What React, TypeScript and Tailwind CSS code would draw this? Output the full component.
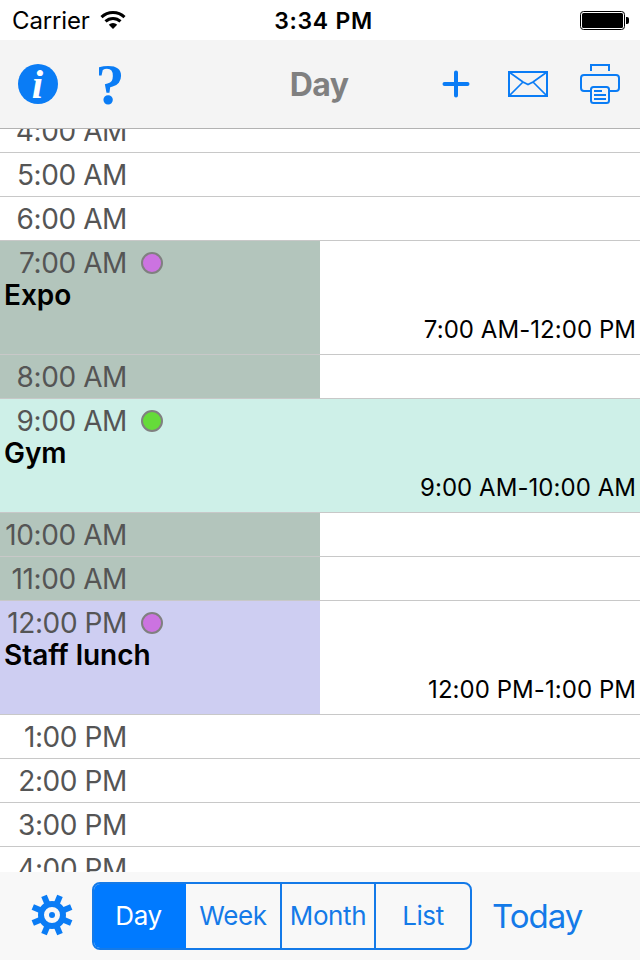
type Slot = {
  time: string
  fill?: string
  event?: { title: string; range: string; dot: string }
}

const SLOTS: Slot[] = [
  { time: '4:00 AM' },
  { time: '5:00 AM' },
  { time: '6:00 AM' },
  {
    time: '7:00 AM',
    fill: 'w-1/2 bg-[#b3c5bc]',
    event: { title: 'Expo', range: '7:00 AM-12:00 PM', dot: 'bg-[#cc73e1]' },
  },
  { time: '8:00 AM', fill: 'w-1/2 bg-[#b3c5bc]' },
  {
    time: '9:00 AM',
    fill: 'w-full bg-[#cef0e8]',
    event: { title: 'Gym', range: '9:00 AM-10:00 AM', dot: 'bg-[#65db39]' },
  },
  { time: '10:00 AM', fill: 'w-1/2 bg-[#b3c5bc]' },
  { time: '11:00 AM', fill: 'w-1/2 bg-[#b3c5bc]' },
  {
    time: '12:00 PM',
    fill: 'w-1/2 bg-[#cecef2]',
    event: { title: 'Staff lunch', range: '12:00 PM-1:00 PM', dot: 'bg-[#cc73e1]' },
  },
  { time: '1:00 PM' },
  { time: '2:00 PM' },
  { time: '3:00 PM' },
  { time: '4:00 PM' },
]

const VIEWS = [
  { label: 'Day', style: 'w-[92px] bg-[#007aff] pr-[3px] text-white' },
  { label: 'Week', style: 'w-[96px] border-r-2' },
  { label: 'Month', style: 'w-[94px] border-r-2' },
  { label: 'List', style: 'flex-1' },
]

const GEAR_TEETH = [22.5, 67.5, 112.5, 157.5, 202.5, 247.5, 292.5, 337.5]

function StatusBar() {
  return (
    <div className="flex h-10 shrink-0 items-center bg-white text-black">
      <div className="flex flex-1 items-center pl-3">
        <span className="w-[88px] pt-px text-[24px] leading-[39px] tracking-[-0.15px]">Carrier</span>
        <svg width="26" height="20" viewBox="0 0 26 20" fill="none" stroke="#000">
          <path d="M1.500 7.200a16.500 16.500 0 0 1 23 0" strokeWidth="3" />
          <path d="M5.500 11.400a11 11 0 0 1 15 0" strokeWidth="3" />
          <path d="M13 19l-4.200-4.200a6 6 0 0 1 8.400 0z" fill="#000" stroke="none" />
        </svg>
      </div>
      <span className="pl-[6px] pt-[2px] text-[23px] font-semibold leading-[38px] tracking-[0.7px]">3:34 PM</span>
      <div className="flex flex-1 justify-end pr-[11px]">
        <svg width="49" height="19" viewBox="0 0 49 19">
          <rect x="0.5" y="0.5" width="44" height="18" rx="3" fill="none" stroke="#000" />
          <rect x="2" y="2" width="41" height="15" rx="1.5" />
          <path d="M46 6h1a2 2 0 0 1 2 2v3a2 2 0 0 1-2 2h-1z" />
        </svg>
      </div>
    </div>
  )
}

function NavBar() {
  return (
    <header className="flex h-[89px] shrink-0 items-center border-b border-[#b2b2b2] bg-[#f4f4f4] text-[#0a7aef]">
      <div className="flex flex-1 items-center gap-[38px] pl-[18px]">
        <svg width="40" height="40" viewBox="0 0 40 40" overflow="visible">
          <circle cx="20" cy="20" r="20" fill="#0a7cf5" />
          <text x="19.5" y="33.5" textAnchor="middle" fill="#fff" className="font-['Liberation_Serif',serif] text-[41px] font-bold italic">i</text>
        </svg>
        <svg width="28" height="40" viewBox="0 0 28 40" overflow="visible">
          <text x="14" y="39.5" textAnchor="middle" fill="#0a7cf5" className="font-['Liberation_Serif',serif] text-[58px] font-bold">?</text>
        </svg>
      </div>
      <h1 className="pt-px text-[32px] font-bold leading-[43px] tracking-[-0.6px] text-[#808080]">Day</h1>
      <div className="flex flex-1 items-center justify-end pr-5">
        <svg width="28" height="28" viewBox="0 0 28 28" stroke="#0a7cf5" strokeWidth="4" strokeLinecap="round">
          <path d="M2.5 14h23M14 2.5v23" />
        </svg>
        <svg className="mx-[32px] ml-[38px]" width="40" height="26" viewBox="0 0 40 26" fill="none" stroke="#0a7cf5" strokeWidth="2">
          <rect x="1" y="1" width="38" height="24" />
          <path d="M1 1l14 10 5 2.500 5-2.500 14-10M1 25l14-14M39 25l-14-14" strokeWidth="1.700" />
        </svg>
        <svg width="40" height="40" viewBox="0 0 40 40" fill="none" stroke="#0a7cf5" strokeWidth="2">
          <path d="M11 7V1h18v6" />
          <path d="M11 27H4a3 3 0 0 1-3-3V14a3 3 0 0 1 3-3h32a3 3 0 0 1 3 3v10a3 3 0 0 1-3 3h-7" />
          <rect x="11" y="23" width="18" height="16" rx="2.500" />
          <path d="M14 27h8M14 31h12M14 35h12" />
        </svg>
      </div>
    </header>
  )
}

function SlotRow({ slot }: { slot: Slot }) {
  const { time, fill, event } = slot
  return (
    <div className={`grid shrink-0 border-b border-[#c8c8c8] ${event ? 'h-[114px]' : 'h-11'}`}>
      <div className={`col-start-1 row-start-1 ${fill ?? ''}`} />
      <div className="col-start-1 row-start-1 flex flex-col">
        <div className="flex h-[43px] items-center gap-[14px]">
          <span className="w-[127px] pt-px text-right text-[28px] leading-[42px] tracking-[-0.4px] text-[#555]">{time}</span>
          {event && <span className={`size-[22px] rounded-full border-2 border-[#808080] ${event.dot}`} />}
        </div>
        {event && (
          <>
            <p className="-mt-[7px] pl-1 text-[28px] font-semibold leading-9 tracking-[-0.05px] text-black">{event.title}</p>
            <p className="pr-1 text-right text-[24px] leading-[34px] tracking-[0.05px] text-black">{event.range}</p>
          </>
        )}
      </div>
    </div>
  )
}

function Toolbar() {
  return (
    <footer className="flex h-[88px] shrink-0 items-center bg-[#f8f8f8] pl-8 text-[#147ae8]">
      <svg className="mr-5 mb-[2px]" width="40" height="40" viewBox="-20 -20 40 40" overflow="visible" fill="#0a7cf5">
        {GEAR_TEETH.map(angle => (
          <rect key={angle} x="-3" y="-20.800" width="6" height="9" transform={`rotate(${angle})`} />
        ))}
        <circle r="11" fill="none" stroke="#0a7cf5" strokeWidth="6" />
        <circle r="3" />
      </svg>
      <div className="flex h-[68px] w-[380px] overflow-hidden rounded-lg border-2 border-[#147ae8]">
        {VIEWS.map(view => (
          <button key={view.label} className={`border-[#147ae8] pb-px text-[26px] tracking-[-0.4px] ${view.style}`}>
            {view.label}
          </button>
        ))}
      </div>
      <button className="ml-[20px] pt-[2px] text-[33px] tracking-[-1px]">Today</button>
    </footer>
  )
}

export default function App() {
  return (
    <div className="flex h-[960px] w-[640px] flex-col overflow-hidden bg-white font-['Inter',sans-serif]">
      <StatusBar />
      <NavBar />
      <main className="flex min-h-0 flex-1 flex-col overflow-hidden">
        <div className="-mt-5 flex flex-col">
          {SLOTS.map(slot => (
            <SlotRow key={slot.time} slot={slot} />
          ))}
        </div>
      </main>
      <Toolbar />
    </div>
  )
}
